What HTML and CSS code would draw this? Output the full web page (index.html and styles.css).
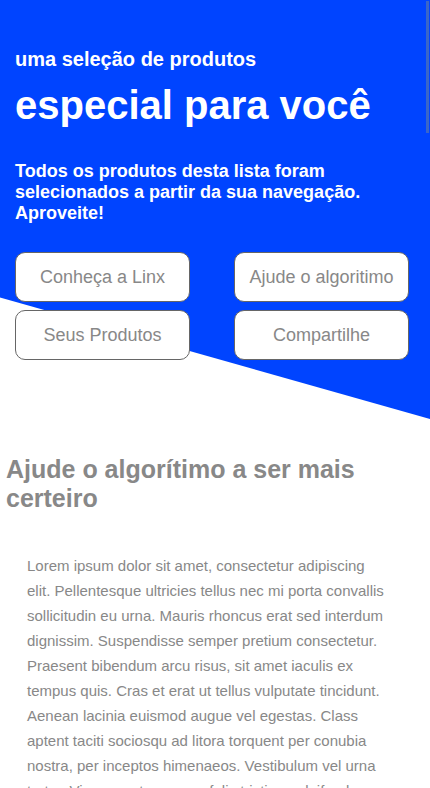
FILE: index.html
```html
<!DOCTYPE html>
<html lang="pt-BR">
<head>
<meta charset="utf-8">
<meta name="viewport" content="width=device-width, initial-scale=1">
<title>Uma seleção de produtos especial para você</title>
<link rel="stylesheet" href="styles.css">
</head>
<body>
<header class="hero">
  <p class="hero-kicker">uma seleção de produtos</p>
  <h1 class="hero-title">especial para você</h1>
  <p class="hero-text">Todos os produtos desta lista foram selecionados a partir da sua navegação. Aproveite!</p>
  <nav class="hero-nav">
    <button type="button" class="nav-button">Conheça a Linx</button>
    <button type="button" class="nav-button">Ajude o algoritimo</button>
    <button type="button" class="nav-button">Seus Produtos</button>
    <button type="button" class="nav-button">Compartilhe</button>
  </nav>
</header>
<main class="about">
  <h2 class="about-title">Ajude o algorítimo a ser mais certeiro</h2>
  <p class="about-text">Lorem ipsum dolor sit amet, consectetur adipiscing elit. Pellentesque ultricies tellus nec mi porta convallis sollicitudin eu urna. Mauris rhoncus erat sed interdum dignissim. Suspendisse semper pretium consectetur. Praesent bibendum arcu risus, sit amet iaculis ex tempus quis. Cras et erat ut tellus vulputate tincidunt. Aenean lacinia euismod augue vel egestas. Class aptent taciti sociosqu ad litora torquent per conubia nostra, per inceptos himenaeos. Vestibulum vel urna tortor. Vivamus ut purus ac felis tristique eleifend.</p>
</main>
<div class="scroll-thumb"></div>
</body>
</html>
```
FILE: styles.css
```css
* {
  box-sizing: border-box;
}

body {
  margin: 0;
  height: 100vh;
  overflow: hidden;
  background: #fff;
  color: #888;
  font-family: "Liberation Sans", Arial, sans-serif;
}

.hero {
  position: relative;
  z-index: 0;
  padding: 48px 21px 59px 15px;
  color: #fff;
}

.hero::before {
  content: "";
  position: absolute;
  inset: 0;
  z-index: -1;
  background: #04f;
  clip-path: polygon(0 0, 100% 0, 100% 100%, 0 71%);
}

.hero-kicker {
  margin: 0;
  font-size: 20px;
  font-weight: bold;
  line-height: 23px;
}

.hero-title {
  margin: 11px 0 32px;
  font-size: 40px;
  line-height: 47px;
}

.hero-text {
  margin: 0 0 28px;
  font-size: 18px;
  font-weight: bold;
  line-height: 21px;
}

.hero-nav {
  display: grid;
  grid-template-columns: 1fr 1fr;
  gap: 8px 44px;
}

.nav-button {
  height: 50px;
  padding: 0;
  border: 1px solid #666;
  border-radius: 10px;
  background: #fff;
  color: #888;
  font-family: inherit;
  font-size: 18px;
}

.about {
  padding: 36px 6px 0;
}

.about-title {
  margin: 0 0 40px;
  font-size: 25px;
  line-height: 29px;
}

.about-text {
  margin: 0;
  padding: 0 36px 0 21px;
  font-size: 15px;
  line-height: 25px;
}

.scroll-thumb {
  position: absolute;
  top: 1px;
  right: 1px;
  width: 3px;
  height: 132px;
  background: #3b66c8;
}
```
